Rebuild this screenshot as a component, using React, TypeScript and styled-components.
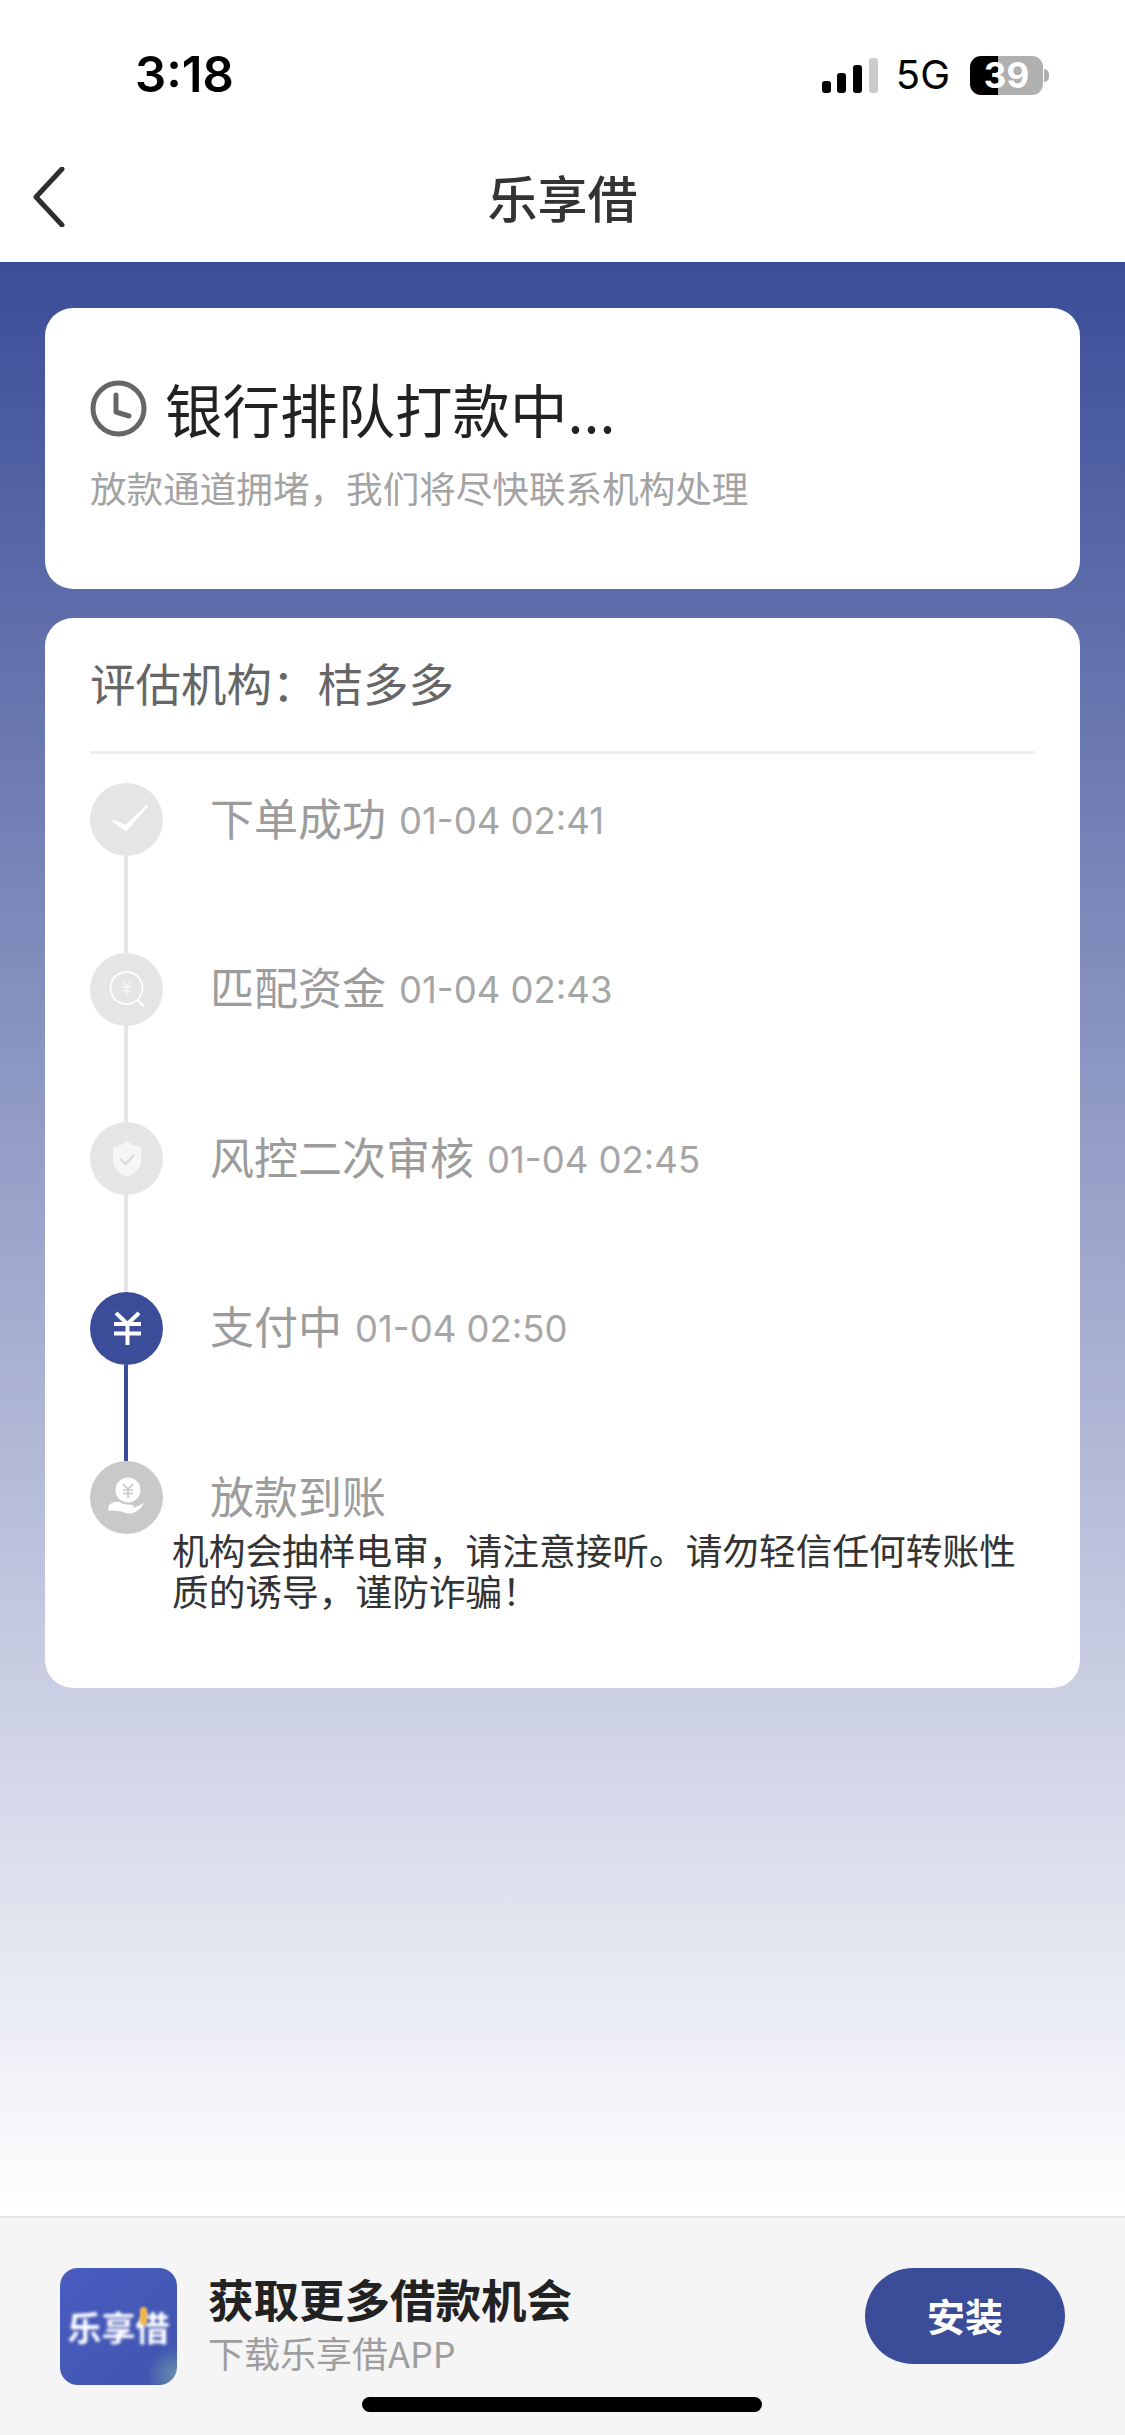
import styled, { createGlobalStyle } from "styled-components";

const BLUE = "#3b4d98";
const CJK = `"Noto Sans CJK SC", "Liberation Sans", sans-serif`;

const GlobalStyle = createGlobalStyle`
  html, body {
    margin: 0;
    padding: 0;
    background: #fff;
    font-family: ${CJK};
  }
  * { box-sizing: border-box; }
`;

type StepState = "done" | "active" | "pending";

const steps: { label: string; time?: string; state: StepState; icon: string; lineActive?: boolean }[] = [
  { label: "下单成功", time: "01-04 02:41", state: "done", icon: "check" },
  { label: "匹配资金", time: "01-04 02:43", state: "done", icon: "search" },
  { label: "风控二次审核", time: "01-04 02:45", state: "done", icon: "shield" },
  { label: "支付中", time: "01-04 02:50", state: "active", icon: "yen", lineActive: true },
  { label: "放款到账", state: "pending", icon: "hand" },
];

function StepIcon({ name }: { name: string }) {
  if (name === "check") {
    return (
      <svg width="73" height="73" viewBox="0 0 73 73" fill="none">
        <path d="M23 38 L36 47 L57 23 L36 43 Z" fill="#fff" stroke="#fff" strokeWidth="2" strokeLinejoin="round" />
      </svg>
    );
  }
  if (name === "search") {
    return (
      <svg width="73" height="73" viewBox="0 0 73 73" fill="none" stroke="#fff">
        <circle cx="36.5" cy="35" r="16" strokeWidth="1.8" />
        <path d="M47.5 47 L54 53.5" strokeWidth="2" />
        <path d="M32 28 L36.5 33 L41 28 M31.5 34 H41.5 M31.5 38 H41.5 M36.5 33 V43" strokeWidth="1.3" stroke="#f7f7f7" />
      </svg>
    );
  }
  if (name === "shield") {
    return (
      <svg width="73" height="73" viewBox="0 0 73 73" fill="none">
        <path d="M37 19 C41 23 46 24 51 25 V39 C51 47 43 52 37 55 C31 52 23 47 23 39 V25 C28 24 33 23 37 19 Z" fill="#f6f6f6" />
        <path d="M30 37 L35.5 42 L44 33" stroke="#d8d8d8" strokeWidth="2" />
      </svg>
    );
  }
  if (name === "yen") {
    return (
      <svg width="73" height="73" viewBox="0 0 73 73" fill="none" stroke="#fff" strokeWidth="4">
        <path d="M26 21 L37.5 32 L49 21 M24 32 H51 M24 41.5 H51 M37.5 32 V53" />
      </svg>
    );
  }
  return (
    <svg width="73" height="73" viewBox="0 0 73 73" fill="none">
      <circle cx="38" cy="29" r="12.5" fill="#fff" />
      <path d="M33 23 L38 28 L43 23 M33 29 H43 M33 32.5 H43 M38 28 V37" stroke="#c8c8c8" strokeWidth="1.6" />
      <path d="M19 44 C24 40 29 40 33 43 L42 44 C45 45 44 47 41 47 L36 48 L46 46 L54 42 C50 50 42 54 36 52 C30 50 24 49 18 50 Z" fill="#fff" />
    </svg>
  );
}

export default function App() {
  return (
    <>
      <GlobalStyle />
      <Page>
        <StatusBar>
          <Clock>3:18</Clock>
          <StatusRight>
            <svg width="56" height="35" viewBox="0 0 56 35">
              <rect x="0" y="23" width="9" height="12" rx="3" fill="#000" />
              <rect x="15" y="15" width="9" height="20" rx="3" fill="#000" />
              <rect x="31" y="7" width="9" height="28" rx="3" fill="#000" />
              <rect x="47" y="0" width="9" height="35" rx="3" fill="#ccc" />
            </svg>
            <Network>5G</Network>
            <Battery>
              <BatteryLevel>39</BatteryLevel>
              <BatteryNub />
            </Battery>
          </StatusRight>
        </StatusBar>
        <NavBar>
          <BackButton>
            <svg width="32" height="60" viewBox="0 0 32 60" fill="none">
              <path d="M29 2 L3 30 L29 58" stroke="#2e2e2e" strokeWidth="5" strokeLinecap="round" strokeLinejoin="round" />
            </svg>
          </BackButton>
          <NavTitle>乐享借</NavTitle>
        </NavBar>
        <Main>
          <StatusCard>
            <StatusHead>
              <svg width="57" height="57" viewBox="0 0 57 57" fill="none" stroke="#666" strokeWidth="5">
                <circle cx="28.5" cy="28.5" r="25.5" />
                <path d="M26 15 V32 L39 36" strokeLinecap="round" strokeLinejoin="round" />
              </svg>
              <StatusTitle>银行排队打款中...</StatusTitle>
            </StatusHead>
            <StatusHint>放款通道拥堵，我们将尽快联系机构处理</StatusHint>
          </StatusCard>
          <FlowCard>
            <FlowHeader>评估机构：桔多多</FlowHeader>
            <Timeline>
              {steps.map((s, i) => (
                <Step key={s.label} $last={i === steps.length - 1}>
                  <Marker>
                    <Dot $state={s.state}>
                      <StepIcon name={s.icon} />
                    </Dot>
                    {i < steps.length - 1 && <Connector $active={s.lineActive} />}
                  </Marker>
                  <StepText>
                    <StepLabel>{s.label}</StepLabel>
                    {s.time && <StepTime>{s.time}</StepTime>}
                  </StepText>
                </Step>
              ))}
            </Timeline>
            <Notice>机构会抽样电审，请注意接听。请勿轻信任何转账性质的诱导，谨防诈骗！</Notice>
          </FlowCard>
        </Main>
        <Footer>
          <AppIcon>
            <AppIconName>乐享借</AppIconName>
            <AppIconSpark />
          </AppIcon>
          <FooterText>
            <FooterTitle>获取更多借款机会</FooterTitle>
            <FooterSub>下载乐享借APP</FooterSub>
          </FooterText>
          <InstallButton>安装</InstallButton>
          <HomeIndicator />
        </Footer>
      </Page>
    </>
  );
}

const Page = styled.div`
  width: 1125px;
  height: 2435px;
  display: flex;
  flex-direction: column;
  overflow: hidden;
  background: #fff;
`;

const StatusBar = styled.div`
  height: 132px;
  padding: 50px 76px 0 135px;
  display: flex;
  justify-content: space-between;
  align-items: flex-start;
`;

const Clock = styled.div`
  font-family: Inter, "Liberation Sans", sans-serif;
  font-size: 49px;
  line-height: 50px;
  font-weight: 600;
  color: #000;
`;

const StatusRight = styled.div`
  display: flex;
  align-items: center;
  padding-top: 5px;

  svg {
    margin-right: 18px;
  }
`;

const Network = styled.span`
  font-family: Inter, "Liberation Sans", sans-serif;
  font-size: 40px;
  line-height: 40px;
  color: #000;
  margin-right: 20px;
`;

const Battery = styled.div`
  width: 79px;
  height: 39px;
  display: flex;
  align-items: center;
`;

const BatteryLevel = styled.div`
  width: 73px;
  height: 39px;
  border-radius: 11px;
  background: linear-gradient(90deg, #000 0 28px, #b0b0b0 28px);
  color: #fff;
  font-family: Inter, "Liberation Sans", sans-serif;
  font-size: 35px;
  line-height: 39px;
  font-weight: 700;
  text-align: center;
`;

const BatteryNub = styled.div`
  width: 5px;
  height: 13px;
  margin-left: 1px;
  background: #b0b0b0;
  border-radius: 0 6px 6px 0;
`;

const NavBar = styled.div`
  height: 130px;
  padding: 0 33px;
  display: grid;
  grid-template-columns: 1fr auto 1fr;
  align-items: center;
`;

const BackButton = styled.div`
  display: flex;
  align-items: center;
  height: 60px;
`;

const NavTitle = styled.div`
  font-size: 50px;
  line-height: 60px;
  font-weight: 500;
  color: #333;
  margin-top: -3px;
`;

const Main = styled.div`
  flex: 1;
  padding: 46px 45px 0;
  display: flex;
  flex-direction: column;
  gap: 29px;
  background: linear-gradient(180deg, ${BLUE} 0%, #ffffff 100%);
`;

const Card = styled.div`
  background: #fff;
  border-radius: 28px;
`;

const StatusCard = styled(Card)`
  height: 281px;
  padding: 70px 45px 0;
`;

const StatusHead = styled.div`
  display: flex;
  align-items: center;
  gap: 18px;
  height: 60px;
`;

const StatusTitle = styled.div`
  font-size: 57.5px;
  line-height: 60px;
  color: #222;
`;

const StatusHint = styled.div`
  margin-top: 28px;
  font-size: 36.6px;
  line-height: 44px;
  color: #a3a3a3;
`;

const FlowCard = styled(Card)`
  height: 1070px;
  padding: 0 45px;
`;

const FlowHeader = styled.div`
  height: 136px;
  padding-bottom: 6px;
  display: flex;
  align-items: center;
  border-bottom: 3px solid #eeeeee;
  font-size: 45.5px;
  color: #666;
`;

const Timeline = styled.div`
  margin-top: 29px;
  display: flex;
  flex-direction: column;
`;

const Step = styled.div<{ $last?: boolean }>`
  height: ${(p) => (p.$last ? "73px" : "169.5px")};
  display: flex;
`;

const Marker = styled.div`
  width: 73px;
  display: flex;
  flex-direction: column;
  align-items: center;
`;

const dotColors: Record<StepState, string> = {
  done: "#e5e5e5",
  active: BLUE,
  pending: "#c9c9c9",
};

const Dot = styled.div<{ $state: StepState }>`
  width: 73px;
  height: 73px;
  flex: none;
  border-radius: 50%;
  background: ${(p) => dotColors[p.$state]};
  display: flex;

  svg {
    display: block;
  }
`;

const Connector = styled.div<{ $active?: boolean }>`
  width: 4px;
  flex: 1;
  margin-right: 2px;
  background: ${(p) => (p.$active ? BLUE : "#e6e6e6")};
`;

const StepText = styled.div`
  margin-left: 47px;
  height: 67px;
  display: flex;
  align-items: center;
`;

const StepLabel = styled.span`
  font-size: 44px;
  color: #9c9c9c;
`;

const StepTime = styled.span`
  margin-left: 13px;
  padding-top: 8px;
  font-family: Inter, "Liberation Sans", sans-serif;
  font-size: 36.5px;
  color: #a6a6a6;
`;

const Notice = styled.div`
  margin: -5px 0 0 82px;
  width: 860px;
  font-size: 36.7px;
  line-height: 41px;
  color: #333;
`;

const Footer = styled.div`
  height: 219px;
  padding: 50px 60px 0;
  display: flex;
  align-items: flex-start;
  position: relative;
  background: #f5f5f5;
  border-top: 2px solid #e6e6e6;
`;

const AppIcon = styled.div`
  width: 117px;
  height: 117px;
  flex: none;
  border-radius: 18px;
  position: relative;
  overflow: hidden;
  display: flex;
  align-items: center;
  justify-content: center;
  background:
    radial-gradient(circle at 100% 92%, #6c92ad 0, transparent 30px),
    linear-gradient(135deg, #4a5cc0 0%, #3f55ae 100%);
`;

const AppIconName = styled.div`
  font-size: 34px;
  line-height: 44px;
  font-weight: 700;
  color: #fff;
  white-space: nowrap;
  filter: blur(1.4px);
`;

const AppIconSpark = styled.div`
  position: absolute;
  left: 80px;
  top: 39px;
  width: 7px;
  height: 18px;
  border-radius: 3px;
  background: #f3b64a;
  filter: blur(1.2px);
`;

const FooterText = styled.div`
  margin-left: 31px;
  display: flex;
  flex-direction: column;
`;

const FooterTitle = styled.div`
  font-size: 45.5px;
  line-height: 60px;
  font-weight: 700;
  color: #222;
`;

const FooterSub = styled.div`
  margin-top: 2px;
  font-size: 36px;
  line-height: 44px;
  color: #9e9e9e;
`;

const InstallButton = styled.div`
  margin-left: auto;
  width: 200px;
  height: 96px;
  padding-bottom: 3px;
  border-radius: 48px;
  background: ${BLUE};
  color: #fff;
  font-size: 38px;
  font-weight: 700;
  display: flex;
  align-items: center;
  justify-content: center;
`;

const HomeIndicator = styled.div`
  position: absolute;
  left: 362px;
  top: 179px;
  width: 400px;
  height: 15px;
  border-radius: 8px;
  background: #000;
`;
